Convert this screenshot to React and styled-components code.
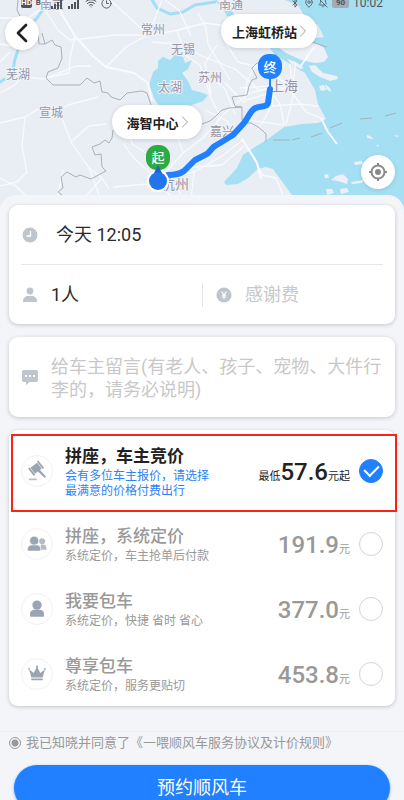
import React, { useState } from 'react'
import styled, { createGlobalStyle, css } from 'styled-components'
import { Bluetooth, MapPin, BellOff, Wifi, Clock3, ChevronLeft, ChevronRight } from 'lucide-react'

const GlobalStyle = createGlobalStyle`
    * {
        box-sizing: border-box;
    }
    html {
        scrollbar-width: none;
    }
    body {
        margin: 0;
        background: #f4f5f8;
        color: #2b2b2b;
        font-family: Roboto, "Noto Sans CJK SC", sans-serif;
    }
    button, input, textarea {
        font-family: inherit;
        color: inherit;
        margin: 0;
        padding: 0;
        border: 0;
        background: none;
    }
`;

const Page = styled.main`
    min-height: 100vh;
    overflow: hidden;
`;

/* ---------- map ---------- */

const MapArea = styled.section`
    position: relative;
    height: 212px;
    overflow: hidden;
    background: #e9edf4;
`;
const MapSvg = styled.svg`
    display: block;
    width: 100%;
    height: 100%;
    text {
        fill: #9595a5;
        stroke: #f1f3f8;
        stroke-width: 2px;
        paint-order: stroke;
        font-size: 12px;
    }
    .big {
        font-size: 14px;
    }
    .pin {
        fill: #fff;
        stroke: none;
        font-size: 13px;
        font-weight: 500;
        text-anchor: middle;
    }
`;
const StatusBar = styled.div`
    position: absolute;
    top: -5px;
    left: 0;
    right: 0;
    height: 16px;
    padding: 0 21px;
    display: flex;
    justify-content: space-between;
    color: #50545b;
    font-size: 12px;
    line-height: 16px;
`;
const StatusGroup = styled.div`
    display: flex;
    align-items: center;
    gap: ${props => props.$gap}px;
`;
const Chip = styled.span`
    padding: 0 ${props => props.$pad}px;
    border-radius: 2px;
    background: ${props => props.$bg};
    color: ${props => props.$color};
    font-size: 8px;
    line-height: 10px;
    font-weight: 700;
`;
const RoundButton = styled.button`
    position: absolute;
    width: 34px;
    height: 34px;
    border-radius: 50%;
    background: #fff;
    box-shadow: 0 1px 4px rgba(0, 0, 0, 0.12);
    display: flex;
    align-items: center;
    justify-content: center;
    ${props => props.$corner === 'back'
        ? css`top: 16px; left: 5px;`
        : css`top: 155px; right: 9px;`}
`;
const PlaceButton = styled.button`
    position: absolute;
    top: ${props => props.$top}px;
    left: calc(50% + ${props => props.$left}px);
    min-width: 90px;
    height: 34px;
    padding: 0 4px 0 11px;
    border-radius: 17px;
    background: #fff;
    box-shadow: 0 1px 5px rgba(0, 0, 0, 0.14);
    display: flex;
    align-items: center;
    justify-content: center;
    font-size: 13px;
    font-weight: 700;
    white-space: nowrap;
    color: #222;
    svg {
        margin-left: -4px;
    }
`;

/* ---------- sheet ---------- */

const Sheet = styled.form`
    position: relative;
    margin-top: -17px;
    padding: 10px 9px 0;
    border-radius: 16px 16px 0 0;
    background: #f4f5f8;
    display: flex;
    flex-direction: column;
    gap: 13px;
`;
const Card = styled.section`
    border-radius: 9px;
    background: #fff;
    box-shadow: 0 1px 4px rgba(0, 0, 0, 0.2);
`;
const TripCard = styled(Card)`
    padding: 0 12px;
`;
const TripRow = styled.div`
    display: grid;
    grid-template-columns: ${props => props.$split ? '1fr 1fr' : '1fr'};
    align-items: center;
    height: ${props => props.$split ? 60 : 59}px;
    border-top: ${props => props.$split ? '1px solid #e6e6e6' : '0'};
`;
const Field = styled.label`
    min-width: 0;
    display: flex;
    align-items: center;
    gap: ${props => props.$gap || 12}px;
    padding-left: ${props => props.$inset || 0}px;
    border-left: ${props => props.$inset ? '1px solid #e6e6e6' : '0'};
    svg {
        flex: none;
    }
`;
const FieldInput = styled.input`
    flex: 1;
    min-width: 0;
    height: 24px;
    font-size: 18px;
    line-height: 24px;
    outline: none;
    &::placeholder {
        color: #c8c8c8;
        opacity: 1;
    }
`;
const NoteCard = styled(Card)`
    padding: 16px 12px;
`;
const Note = styled.textarea`
    flex: 1;
    min-width: 0;
    height: 48px;
    padding-top: 2px;
    font-size: 18px;
    line-height: 23px;
    resize: none;
    outline: none;
    overflow: hidden;
    &::placeholder {
        color: #c8c8c8;
        opacity: 1;
    }
`;

/* ---------- ride options ---------- */

const OptionRow = styled.label`
    position: relative;
    display: flex;
    align-items: center;
    height: ${props => props.$framed ? 81 : 65}px;
    padding: 0 12px;
    color: ${props => props.$active ? '#222' : '#999'};
    ${props => props.$framed && css`
        &::after {
            content: "";
            position: absolute;
            top: 4px;
            right: -2px;
            bottom: -1px;
            left: 2px;
            border: 2px solid #fa2415;
            pointer-events: none;
        }
    `}
`;
const OptionIcon = styled.svg`
    flex: none;
    width: 32px;
    height: 32px;
    border: 1px solid #f2f2f2;
    border-radius: 50%;
    fill: #9ba5b1;
`;
const OptionText = styled.span`
    flex: 1;
    min-width: 0;
    padding-left: 12px;
    display: flex;
    flex-direction: column;
`;
const OptionTitle = styled.strong`
    font-size: 17px;
    line-height: 26px;
    font-weight: ${props => props.$active ? 700 : 500};
`;
const OptionHint = styled.span`
    font-size: 12px;
    line-height: 15px;
    white-space: pre-line;
    color: ${props => props.$active ? '#2b83f6' : '#999'};
`;
const Price = styled.span`
    display: flex;
    align-items: baseline;
    margin-right: 9px;
    padding-top: 8px;
    font-size: 11px;
    line-height: 30px;
    b {
        font-size: 24px;
        font-weight: 500;
    }
`;
const OptionRadio = styled.input`
    appearance: none;
    flex: none;
    width: 24px;
    height: 24px;
    border: 1px solid #d4d4d4;
    border-radius: 50%;
    display: flex;
    align-items: center;
    justify-content: center;
    &:checked {
        border-color: #2080ff;
        background: #2080ff;
    }
    &:checked::after {
        content: "";
        width: 7px;
        height: 12px;
        margin-bottom: 4px;
        border: solid #fff;
        border-width: 0 2px 2px 0;
        transform: rotate(45deg);
    }
`;

/* ---------- footer ---------- */

const Footer = styled.footer`
    margin: 12px -9px 0;
    border-top: 1px solid #eff0f3;
    padding: 1px 14px 12px;
`;
const Agreement = styled.div`
    display: flex;
    align-items: center;
    gap: 5px;
    height: 20px;
    margin-left: -5px;
    font-size: 13px;
    line-height: 20px;
    color: #999;
    white-space: nowrap;
    a {
        color: inherit;
        text-decoration: none;
    }
`;
const AgreeRadio = styled.input`
    appearance: none;
    flex: none;
    width: 12px;
    height: 12px;
    border: 1px solid #999;
    border-radius: 50%;
    &:checked {
        background: radial-gradient(circle, #999 0 3px, transparent 4px);
    }
`;
const SubmitButton = styled.button`
    display: block;
    width: 100%;
    height: 46px;
    margin-top: 12px;
    border-radius: 23px;
    background: #2080ff;
    box-shadow: 0 1px 3px rgba(32, 128, 255, 0.6);
    color: #fff;
    font-size: 18px;
    line-height: 46px;
`;

const options = [
    { id: 'bid', title: '拼座，车主竞价', hint: '会有多位车主报价，请选择\n最满意的价格付费出行', before: '最低', price: '57.6', after: '元起' },
    { id: 'share', title: '拼座，系统定价', hint: '系统定价，车主抢单后付款', price: '191.9', after: '元' },
    { id: 'whole', title: '我要包车', hint: '系统定价，快捷 省时 省心', price: '377.0', after: '元' },
    { id: 'vip', title: '尊享包车', hint: '系统定价，服务更贴切', price: '453.8', after: '元' },
]

const optionDrawings = {
    bid: (
        <>
            <g transform="rotate(-38 15 13)">
                <rect x="10.500" y="9" width="9" height="8" />
                <rect x="8" y="8" width="2" height="10" rx=".6" />
                <rect x="20" y="8" width="2" height="10" rx=".6" />
            </g>
            <path d="M16.500 16l2-2 6.800 7.600c.6.9-.6 2-1.500 1.400z" />
            <rect x="7" y="24" width="9" height="1.800" rx=".9" opacity=".7" />
        </>
    ),
    share: (
        <>
            <g opacity=".75">
                <circle cx="21.500" cy="13" r="3.200" />
                <path d="M20 16.500h2.500c2.300 0 3.500 1.600 3.500 4V22h-6z" />
            </g>
            <circle cx="13" cy="12.500" r="4.800" stroke="#fff" strokeWidth=".6" />
            <path d="M6 22.500v-1c0-3 1.700-4.500 4.500-4.500h5c2.800 0 4.500 1.500 4.500 4.500v1c0 .6-.4 1-1 1H7c-.6 0-1-.4-1-1z" stroke="#fff" strokeWidth=".6" />
        </>
    ),
    whole: (
        <>
            <circle cx="16" cy="11.800" r="5" />
            <path d="M8.500 23.500v-2c0-3 1.800-4.700 4.700-4.700h5.600c2.900 0 4.700 1.700 4.700 4.700v2c0 .5-.3.700-.7.700H9.200c-.4 0-.7-.2-.7-.7z" />
        </>
    ),
    vip: (
        <>
            <path d="M7.500 11l5 3.800L16 8l3.500 6.800 5-3.800-2.500 8.700H10z" />
            <circle cx="7.500" cy="10.500" r="1" />
            <circle cx="16" cy="8" r="1.200" />
            <circle cx="24.500" cy="10.500" r="1" />
            <rect x="9.800" y="20.700" width="12.400" height="2" rx=".4" />
        </>
    ),
}

function RouteMap() {
    return (
        <MapSvg viewBox="0 0 404 212" preserveAspectRatio="xMidYMin slice" role="img" aria-label="路线地图">
            <rect width="404" height="212" fill="#e9edf4" />
            {/* sea and lake */}
            <g fill="#a5dff4">
                <path d="M285 0l13 5 7 12 13 8 6 12-8 1-26 2-20 8 4 6 16 10 15 9 10 17 3 14 8 15-8 4-16 1-18 3-16 12-10 6-15 10-6 13-13 14 2 3 12-1 10-6 10-9 8-2 7 2 8 11 11 15v17h112V0z" />
                <path d="M163 57l7 3 5-5 8 2 2 6 7-3-4 9-6 4 6 8 4 9 8 2 8 3-5 6-11 4-7 2h-25l-5-7-6-15 4-13 5-4v-7z" />
                <path d="M217 0l6 9 5-2 7 8 0 5-8-4-4-7-8-9z" />
            </g>
            <g fill="none" stroke="#a0dff5" strokeLinecap="round" strokeLinejoin="round">
                <path d="M152 0l5 8 13 6 13-2 12-7 20-3" strokeWidth="3" />
                <path d="M44 8l-7 10-8 9M18 50l-3 9-2 11M5 79l-5 3" strokeWidth="3" />
            </g>
            {/* islands */}
            <g fill="#edf0f6">
                <path d="M276 46l18-1 22-2 8 5 4 9-4 5-9 1-14-3-15-7z" />
                <path d="M287 59l9 3 8 6-3 1-9-4zM309 66l6-1 8 8 14 3 1 3-8 2-10-4-8-5zM319 86l5-1 2 5-5 1zM325 84l5 4 1 4-5-3z" />
                <path d="M336 176l7-2 5 5-1 5-9-3-7-1zM324 175l4-1 1 4h-4zM351 182l13-2-2 3-10 1zM326 189l6 0 2 4-7 2zM340 189l7-1 2 4-8 2zM354 162l8-1 1 3-8 1zM367 135l3 1 4 3-7-1zM376 145l3 0-1 2zM395 135l4 1-3 1zM371 166l3 4 9 10-6 0z" />
            </g>
            {/* roads */}
            <g fill="none" stroke="#f9fafd" strokeWidth="1.300" strokeLinejoin="round">
                <path d="M45 10l13 20 12 10 20-2 25-3 38 0 25-5 27-7 37 5 35 11" />
                <path d="M55 0l5 11 15 25 18 20 13 11 28 6 14 10 4 18" strokeWidth="2" />
                <path d="M106 67l20-20 23-13 13-34M75 36l-5 22-1 15-23 5M46 78l30-12h15M0 62l10-10M12 70l20 8 14 1M0 18h28l12-8M0 44l20 3" />
                <path d="M152 42l25 2 25 12 33 13 25 22M177 30l8 25 15 10 12 35 8 16M217 45l-12 18 6 30M165 0l14 10 12 26M198 13l8 15 2 16 22 36M110 0l20 18 19 18" />
                <path d="M0 123l25-6 13-8M25 117l-3 30 5 25-10 10-17 4M38 109l22 4 11 29 18 26 13 10 7 11M71 142l18-16 17-2M50 116l18-11 30-8M89 168l10 27M102 178l-15 17M0 178l16 8 14 14M58 195l5-25M0 93l15-8 10-12M113 187l34-3 11-3" />
                <path d="M158 181l-26-25-8-12M158 181l25-28 20-15 22-25 25-20 20-5M158 181l15 18M158 181l36-9 28-16 22-17M194 172l-3 28M170 176l14 24M129 130l3 14 14 9M183 153l-5-15" />
                <path d="M242 139l12 18 8 18 14 3 8 20M244 146l-22 19-38 3M247 120l37 5M255 107l45-3 18 2M246 100l35-10 15-10M270 90l10 14 4 20M263 66l22 17 16 22 5 7 17 7M290 64l3 33-7 28M258 130l14-25 2-16M296 63l-5 30M240 88l30-2 29 5M235 114l-10-25-15-12M225 83l20 20M258 61l-11 20-2 21M205 110l22 11 12 17M224 40l14 22 20 5" />
                <path d="M314 47l-14 20M321 118l7 14 9 12M242 139l15 24 4 16" strokeWidth="2" />
            </g>
            {/* borders */}
            <g fill="none" stroke="#abafb6" strokeWidth="1">
                <path d="M18 0l-1 10 3 6M38 32l1 12 6 0-3-11M45 44l7-4 3 5 6 2 1 11-4 10-10 4-2 6 7 7h27l7-7 7 5 6-2 2 11 6 1 3 4 9 3 7-7 15-2 5 2 4 12" />
                <path d="M113 130l-1 8-3 5-4-3-5 4-8 3 3 8 6-1 1 13 4 4-15 8-11-4-4 2-9-5-6 5 2 11-5 4 4 3" />
                <path d="M202 124l8-3 7-6 5-5 7-2 13-1 0 13 4 3 5 0 7 4 5 4 3 3v8M242 107l-7-1-3-9 15-2 2-9 3-6 5-2-5-10 5-5 12-4 8-5M312 42l15 5" />
                <path d="M273 140h17M292 140l8-2M311 137l11-4M330 128l12-5M360 119l12-1M385 116l11-3" />
            </g>
            <g>
                <text x="40" y="9">南京</text>
                <text x="219" y="9">南通</text>
                <text x="141" y="34">常州</text>
                <text x="171" y="54">无锡</text>
                <text x="198" y="82">苏州</text>
                <text x="158" y="92">太湖</text>
                <text x="6" y="79">芜湖</text>
                <text x="39" y="117">宣城</text>
                <text x="210" y="136">嘉兴</text>
                <text x="270" y="91" className="big">上海</text>
                <text x="161" y="189" className="big">杭州</text>
            </g>
            {/* route with its end points */}
            <path d="M270 89l-2 14c-1 4-5 3-9 4-8 1-9 8-15 16l-11 12-18 11c-4 2-5 7-10 9l-10 5-11 11c-4 3-8 4-16 4" fill="none" stroke="#2080ff" strokeWidth="6" strokeLinecap="round" strokeLinejoin="round" />
            <path d="M270 76v14" stroke="#2080ff" strokeWidth="2" />
            <rect x="258" y="54" width="24" height="25" rx="11" fill="#2080ff" />
            <text x="270" y="72" className="pin">终</text>
            <rect x="146" y="145" width="24" height="25" rx="11" fill="#2cab45" />
            <text x="158" y="162" className="pin">起</text>
            <circle cx="158" cy="181" r="11" fill="#fff" />
            <path d="M158 165l4 8h-8z" fill="#2364c4" />
            <circle cx="158" cy="181" r="9" fill="#2074ec" />
        </MapSvg>
    )
}

function SignalBars() {
    return (
        <svg width="13" height="12" viewBox="0 0 13 12" fill="currentColor">
            <path d="M0 9h2v3H0zM3 7h2v5H3zM6 5h2v7H6zM9 2h2v10H9z" />
        </svg>
    )
}

function LocateIcon() {
    return (
        <svg width="20" height="20" viewBox="0 0 20 20" fill="none" stroke="#8a8a8a" strokeWidth="2">
            <circle cx="10" cy="10" r="6.500" />
            <path d="M10 1v3M10 16v3M1 10h3M16 10h3" />
            <circle cx="10" cy="10" r="3" fill="#8a8a8a" stroke="none" />
        </svg>
    )
}

function ClockIcon() {
    return (
        <svg width="18" height="18" viewBox="0 0 18 18">
            <circle cx="9" cy="9" r="7.500" fill="#bfc5cd" />
            <path d="M9.500 5v5H5.500" fill="none" stroke="#fff" strokeWidth="1.300" />
        </svg>
    )
}

function PersonIcon() {
    return (
        <svg width="18" height="18" viewBox="0 0 18 18" fill="#bfc5cd">
            <circle cx="9" cy="5" r="3.400" />
            <path d="M2 16v-1c0-3.300 2.600-5 5-5h4c2.400 0 5 1.700 5 5v1z" />
        </svg>
    )
}

function YuanIcon() {
    return (
        <svg width="18" height="18" viewBox="0 0 18 18">
            <circle cx="9" cy="9" r="7.500" fill="#bfc5cd" />
            <path d="M6.500 5.500L9 9l2.500-3.500M9 9v4M6.800 9.300h4.400M6.800 11h4.400" fill="none" stroke="#fff" strokeWidth="1.100" />
        </svg>
    )
}

function MessageIcon() {
    return (
        <svg width="18" height="18" viewBox="0 0 18 18">
            <path d="M3 2h12c1.200 0 2 .8 2 2v8c0 1.200-.8 2-2 2H8.500L5 17v-3H3c-1.200 0-2-.8-2-2V4c0-1.200.8-2 2-2z" fill="#bfc5cd" />
            <path d="M4 7h2v2H4zM8 7h2v2H8zM12 7h2v2h-2z" fill="#fff" />
        </svg>
    )
}

function RideOption(props) {
    const { option, active, onPick } = props;
    return (
        <OptionRow $framed={option.id === 'bid'} $active={active}>
            <OptionIcon viewBox="0 0 32 32" aria-hidden="true">{optionDrawings[option.id]}</OptionIcon>
            <OptionText>
                <OptionTitle $active={active}>{option.title}</OptionTitle>
                <OptionHint $active={active}>{option.hint}</OptionHint>
            </OptionText>
            <Price>{option.before}<b>{option.price}</b>{option.after}</Price>
            <OptionRadio type="radio" name="ride" value={option.id} checked={active} onChange={() => onPick(option.id)} />
        </OptionRow>
    )
}

export default function App() {
    const [ride, setRide] = useState('bid');
    const [time, setTime] = useState('今天 12:05');
    const [people, setPeople] = useState('1人');

    return (
        <Page>
            <GlobalStyle />
            <MapArea>
                <RouteMap />
                <StatusBar>
                    <StatusGroup $gap={4}>
                        <Chip $pad={0} $bg="#50545b" $color="#fff">HD</Chip>
                        <Chip $pad={0} $bg="transparent" $color="#50545b">B</Chip>
                        <Chip $pad={1} $bg="transparent" />
                        <SignalBars />
                        <SignalBars />
                        <Wifi size={12} />
                        <Clock3 size={11} />
                    </StatusGroup>
                    <StatusGroup $gap={4}>
                        <Bluetooth size={10} />
                        <MapPin size={10} />
                        <BellOff size={10} />
                        <Chip $pad={4} $bg="#a3abb3" $color="#50545b">90</Chip>
                        <span>10:02</span>
                    </StatusGroup>
                </StatusBar>
                <RoundButton type="button" $corner="back" aria-label="返回">
                    <ChevronLeft size={32} strokeWidth={2} color="#222" />
                </RoundButton>
                <PlaceButton type="button" $top={14} $left={19}>
                    上海虹桥站<ChevronRight size={20} strokeWidth={1} color="#888" />
                </PlaceButton>
                <PlaceButton type="button" $top={105} $left={-90}>
                    海智中心<ChevronRight size={20} strokeWidth={1} color="#888" />
                </PlaceButton>
                <RoundButton type="button" aria-label="定位">
                    <LocateIcon />
                </RoundButton>
            </MapArea>
            <Sheet onSubmit={event => event.preventDefault()}>
                <TripCard>
                    <TripRow>
                        <Field $gap={17}>
                            <ClockIcon />
                            <FieldInput aria-label="出发时间" value={time} onChange={e => setTime(e.target.value)} />
                        </Field>
                    </TripRow>
                    <TripRow $split>
                        <Field>
                            <PersonIcon />
                            <FieldInput aria-label="乘车人数" value={people} onChange={e => setPeople(e.target.value)} />
                        </Field>
                        <Field $inset={12}>
                            <YuanIcon />
                            <FieldInput aria-label="感谢费" placeholder="感谢费" />
                        </Field>
                    </TripRow>
                </TripCard>
                <NoteCard>
                    <Field>
                        <MessageIcon />
                        <Note aria-label="给车主留言" placeholder="给车主留言(有老人、孩子、宠物、大件行李的，请务必说明)" />
                    </Field>
                </NoteCard>
                <Card>
                    {options.map(option => (
                        <RideOption key={option.id} option={option} active={ride === option.id} onPick={setRide} />
                    ))}
                </Card>
                <Footer>
                    <Agreement>
                        <AgreeRadio type="radio" id="agree" defaultChecked />
                        <span>
                            <label htmlFor="agree">我已知晓并同意了</label>
                            <a href="#rules">《一喂顺风车服务协议及计价规则》</a>
                        </span>
                    </Agreement>
                    <SubmitButton type="submit">预约顺风车</SubmitButton>
                </Footer>
            </Sheet>
        </Page>
    )
}
